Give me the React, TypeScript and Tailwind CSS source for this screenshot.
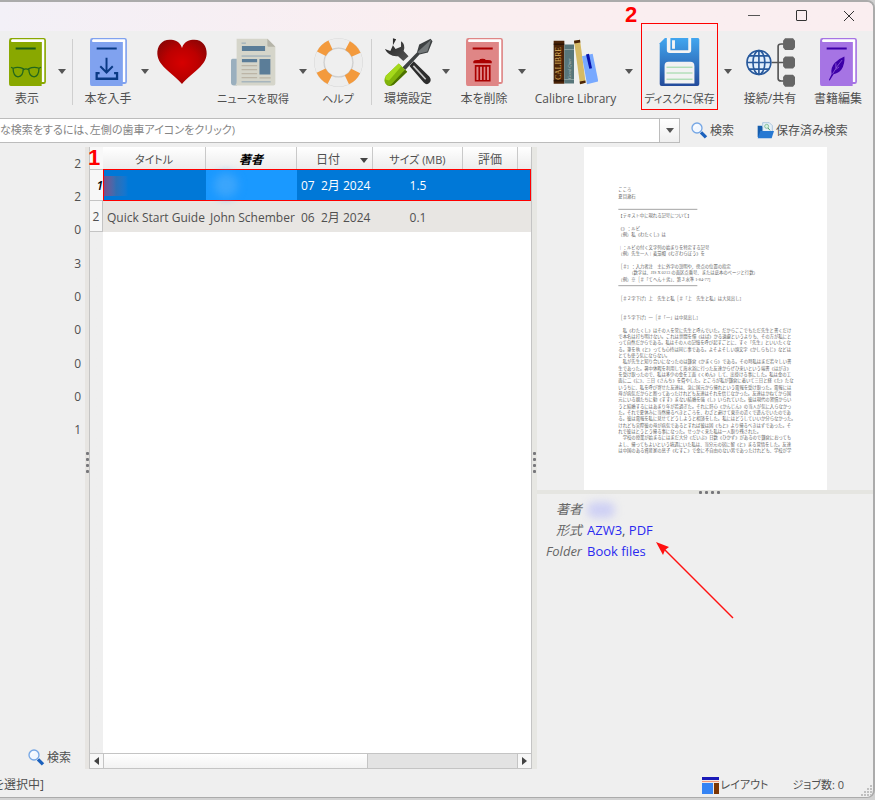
import type { ReactNode } from "react";

const COVER_LINES: [number, string][] = [
  [133, "こころ"],
  [154, "夏目漱石"],
  [212, "【テキスト中に現れる記号について】"],
  [249, "《》：ルビ"],
  [268, "（例）私《わたくし》は"],
  [306, "｜：ルビの付く文字列の始まりを特定する記号"],
  [325, "（例）先生一人｜麦藁帽《むぎわらぼう》を"],
  [364, "［＃］：入力者注　主に外字の説明や、傍点の位置の指定"],
  [383, "　　　（数字は、JIS X 0213 の面区点番号、または底本のページと行数）"],
  [402, "（例）※［＃「てへん＋劣」、第３水準 1-84-77］"],
  [460, "［＃２字下げ］上　先生と私［＃「上　先生と私」は大見出し］"],
  [517, "［＃５字下げ］一［＃「一」は中見出し］"],
];

const COVER_BODY = [
  "　私《わたくし》はその人を常に先生と呼んでいた。だからここでもただ先生と書くだけ",
  "で本名は打ち明けない。これは世間を憚《はば》かる遠慮というよりも、その方が私にと",
  "って自然だからである。私はその人の記憶を呼び起すごとに、すぐ「先生」といいたくな",
  "る。筆を執《と》っても心持は同じ事である。よそよそしい頭文字《かしらもじ》などは",
  "とても使う気にならない。",
  "　私が先生と知り合いになったのは鎌倉《かまくら》である。その時私はまだ若々しい書",
  "生であった。暑中休暇を利用して海水浴に行った友達からぜひ来いという端書《はがき》",
  "を受け取ったので、私は多少の金を工面《くめん》して、出掛ける事にした。私は金の工",
  "面に二《に》、三日《さんち》を費やした。ところが私が鎌倉に着いて三日と経《た》たな",
  "いうちに、私を呼び寄せた友達は、急に国元から帰れという電報を受け取った。電報には",
  "母が病気だからと断ってあったけれども友達はそれを信じなかった。友達はかねてから国",
  "元にいる親たちに勧《すす》まない結婚を強《し》いられていた。彼は現代の習慣からい",
  "うと結婚するにはあまり年が若過ぎた。それに肝心《かんじん》の当人が気に入らなかっ",
  "た。それで夏休みに当然帰るべきところを、わざと避けて東京の近くで遊んでいたのであ",
  "る。彼は電報を私に見せてどうしようと相談をした。私にはどうしていいか分らなかった。",
  "けれども実際彼の母が病気であるとすれば彼は固《もと》より帰るべきはずであった。そ",
  "れで彼はとうとう帰る事になった。せっかく来た私は一人取り残された。",
  "　学校の授業が始まるにはまだ大分《だいぶ》日数《ひかず》があるので鎌倉におっても",
  "よし、帰ってもよいという境遇にいた私は、当分元の宿に留《と》まる覚悟をした。友達",
  "は中国のある資産家の息子《むすこ》で金に不自由のない男であったけれども、学校が学",
];

function Book({ color, children }: { color: string; children: ReactNode }) {
  return (
    <svg viewBox="0 0 112 146" className="h-12 w-[37px]" aria-hidden="true">
      <rect width="112" height="140" rx="7" fill={color} />
      <path d="M9 4H104Q107 4 107 7V134H99V12H7Q4 6 9 4Z" fill="#fff" />
      <path d="M0 8Q2 12 8 12H99V146H5Q0 146 0 141Z" fill={color} />
      {children}
    </svg>
  );
}

function ViewIcon() {
  return (
    <Book color="#89a800">
      <path d="M20 32H81" stroke="#1b5b1b" strokeWidth="6" />
      <g fill="none" stroke="#23661c" strokeWidth="4">
        <path d="M12 92Q26 86 43 93Q43 118 27 118Q13 117 12 92ZM60 93Q76 86 91 92Q90 117 76 118Q60 118 60 93ZM43 97Q51 91 60 97M12 92L6 89M91 92L97 89" />
      </g>
    </Book>
  );
}

function GetIcon() {
  return (
    <Book color="#80a2ef">
      <path d="M20 32H81" stroke="#0a3a85" strokeWidth="6" />
      <g fill="none" stroke="#0a3a85">
        <path d="M50 60V104M31 86L50 105L69 86" strokeWidth="6" />
        <path d="M29 107H20V124H82V107H73" strokeWidth="7" />
      </g>
    </Book>
  );
}

function DeleteIcon() {
  return (
    <Book color="#df8686">
      <path d="M20 32H81" stroke="#a90000" strokeWidth="6" />
      <g fill="#a90000">
        <path d="M22 71Q24 67 34 67H40Q41 63 50 63Q59 63 60 67H66Q76 67 78 71V77H22Z" />
      </g>
      <path d="M29 85H72V130H29ZM40 85V130M51 85V130M61 85V130" fill="none" stroke="#a90000" strokeWidth="5" />
    </Book>
  );
}

function EditIcon() {
  return (
    <Book color="#a674e4">
      <path d="M20 32H81" stroke="#3d00a8" strokeWidth="6" />
      <path d="M74 56Q76 78 65 96Q56 108 41 110L29 130L27 127L35 110Q31 90 45 75Q56 63 74 56Z" fill="#3d00a8" />
      <path d="M67 67Q49 88 38 109M48 77V91M58 88L47 96" stroke="#a674e4" strokeWidth="2" fill="none" />
    </Book>
  );
}

function HeartIcon() {
  return (
    <svg viewBox="0 0 150 144" className="h-12 w-[50px]" aria-hidden="true">
      <defs>
        <radialGradient id="heart" cx="50%" cy="52%" r="60%">
          <stop offset="0" stopColor="#d60000" />
          <stop offset="0.55" stopColor="#bd0000" />
          <stop offset="1" stopColor="#8d0505" />
        </radialGradient>
      </defs>
      <path d="M75 30C68 8 52 5 38 5C14 5 0 24 1 48C3 86 52 109 75 138C98 109 147 86 149 48C150 24 136 5 112 5C98 5 82 8 75 30Z" fill="url(#heart)" />
    </svg>
  );
}

function NewsIcon() {
  return (
    <svg viewBox="0 0 136 144" className="h-12 w-[45px]" aria-hidden="true">
      <path d="M0 67Q0 62 5 62H18V143H9Q0 143 0 134Z" fill="#9aafbe" />
      <path d="M17 2H110L134 26V138Q134 143 128 143H8Q17 143 17 132Z" fill="#d5d5ca" />
      <path d="M110 2L134 26H114Q110 26 110 22Z" fill="#b5b4a8" />
      <path d="M33 24H103V39H33ZM33 63H79V73H33ZM86 63H119V110H86Z" fill="#5b7d98" />
      <path d="M32 54H120M32 132H120M32 15H45" stroke="#8fa5b5" strokeWidth="3" />
      <path d="M32 83H79M32 95H79M32 107H79M32 119H79M86 120H120" stroke="#bcb5a6" strokeWidth="4" />
    </svg>
  );
}

function HelpIcon() {
  return (
    <svg viewBox="0 0 148 148" className="size-[49px]" aria-hidden="true">
      <circle cx="74" cy="74" r="58" fill="none" stroke="#d1d1d1" strokeWidth="31" />
      <circle cx="74" cy="74" r="59" fill="none" stroke="#ededed" strokeWidth="27" />
      <circle cx="74" cy="74" r="58" fill="none" stroke="#f39a3d" strokeWidth="30" strokeDasharray="38 53.1" strokeDashoffset="-26.5" />
      <circle cx="74" cy="74" r="43" fill="none" stroke="#b8b8b8" strokeWidth="1" />
    </svg>
  );
}

function ToolsIcon() {
  return (
    <svg viewBox="0 0 150 148" className="h-12 w-[49px]" aria-hidden="true">
      <defs>
        <linearGradient id="steel" x1="0" y1="0" x2="1" y2="1">
          <stop offset="0" stopColor="#202020" />
          <stop offset="1" stopColor="#555" />
        </linearGradient>
      </defs>
      <path d="M27 1L37 4L27 22L35 34L52 27V10Q67 20 60 40L75 56L59 71L43 56Q15 59 2 34L19 40L27 22Z" fill="url(#steel)" />
      <path d="M78 86L91 72L139 119Q148 130 139 139Q131 147 122 137Z" fill="#2d2d2d" />
      <path d="M90 86L128 127" stroke="#c9c9c9" strokeWidth="5" />
      <path d="M56 91L101 45L108 20L143 2L149 10L135 45L109 51L65 99Z" fill="#3d4142" />
      <path d="M102 44L145 5L133 42L109 48Z" fill="#737879" />
      <path d="M45 79L71 104L30 143Q14 154 4 140Q-3 129 6 116Z" fill="#80b30b" />
      <path d="M45 79L53 87L15 131L4 128Q2 121 6 116Z" fill="#a5d91b" />
      <path d="M71 104L64 98L24 141Q14 152 4 140Q16 151 30 143Z" fill="#4c7100" />
    </svg>
  );
}

function LibraryIcon() {
  return (
    <svg viewBox="0 0 135 135" className="h-[46px] w-[45px]" aria-hidden="true">
      <path d="M2 4H34V133H2Z" fill="#4b2408" />
      <path d="M2 14H34M2 124H34" stroke="#1c0c02" strokeWidth="3" />
      <text transform="translate(25 121) rotate(-90)" fontFamily="Liberation Serif, serif" fontSize="23" fill="#dfb25e">CALIBRE</text>
      <path d="M34 15H63V132H34Z" fill="#58767a" />
      <path d="M34 30H63M34 120H63" stroke="#a5b6b7" strokeWidth="2" />
      <text transform="translate(53 119) rotate(-90)" fontFamily="Liberation Serif, serif" fontStyle="italic" fontSize="14" fill="#b6c2c1">Good Quer</text>
      <path d="M63 4L81 1L98 130L81 134Z" fill="#d6ba65" />
      <path d="M63 4L81 1L82 9L64 12ZM80 126L97 123L98 130L81 134Z" fill="#4b2408" />
      <path d="M87 50L119 43L136 126L102 134Z" fill="#78a9ff" />
      <path d="M99 45L108 43L117 86L109 88Z" fill="#0813ae" />
    </svg>
  );
}

function SaveIcon() {
  return (
    <svg viewBox="0 0 124 148" className="h-12 w-[41px]" aria-hidden="true">
      <defs>
        <linearGradient id="disk" x1="0" y1="0" x2="0" y2="1">
          <stop offset="0" stopColor="#41a6ef" />
          <stop offset="1" stopColor="#244b9b" />
        </linearGradient>
      </defs>
      <path d="M17 0H119Q123 0 123 5V142Q123 148 117 148H7Q1 148 1 142V16Z" fill="url(#disk)" />
      <path d="M23 0H34V38H89V0H98V38Q98 46 90 46H32Q23 46 23 38Z" fill="#f4f4f4" />
      <path d="M39 7H48V33H39Z" fill="#f4f4f4" />
      <path d="M16 140V86Q16 73 28 73H95Q108 73 108 86V140Z" fill="#f2f2f2" />
      <path d="M22 90H102M22 108H102M22 127H102" stroke="#91d49b" strokeWidth="3" />
    </svg>
  );
}

function ShareIcon() {
  return (
    <svg viewBox="0 0 148 148" className="size-[49px]" aria-hidden="true">
      <path d="M77 74H117M97 74V25Q97 18 107 18H117M97 74V122Q97 130 107 130H117" stroke="#555" strokeWidth="5" fill="none" />
      <g fill="#666">
        <path d="M118 1H142L148 8V29L142 36H118L112 29V8ZM118 56H142L148 63V85L142 92H118L112 85V63ZM118 111H142L148 118V140L142 147H118L112 140V118Z" />
      </g>
      <g fill="none" stroke="#28599c" strokeWidth="5">
        <circle cx="39" cy="74" r="36" fill="#e2eefb" />
        <ellipse cx="39" cy="74" rx="18" ry="36" />
        <path d="M39 38V110M3 74H75M8 54H70M8 94H70" />
      </g>
    </svg>
  );
}

function Magnifier() {
  return (
    <svg viewBox="0 0 51 51" className="size-[17px] shrink-0" aria-hidden="true">
      <path d="M30 31L45 46" stroke="#1b61bd" strokeWidth="10" />
      <circle cx="18" cy="18" r="15" fill="#f1f7ff" stroke="#76a7e5" strokeWidth="4" />
      <path d="M9 19Q10 9 20 9" stroke="#fff" strokeWidth="3" fill="none" />
    </svg>
  );
}

function SavedIcon() {
  return (
    <svg viewBox="0 0 51 51" className="size-[17px] shrink-0" aria-hidden="true">
      <path d="M2 11H14L18 16H35V45H2Z" fill="#155dad" />
      <path d="M17 2H37L46 11V30H17Z" fill="#e5eff7" stroke="#8fb5d6" strokeWidth="2" />
      <circle cx="29" cy="13" r="6" fill="#d8f1df" stroke="#64a87b" strokeWidth="2" />
      <path d="M33 18L39 25" stroke="#4e9b67" strokeWidth="3" />
      <path d="M10 27H51L44 49H2Z" fill="#2678d2" />
    </svg>
  );
}

function Caret({ label }: { label: string }) {
  return (
    <button aria-label={label} className="flex h-20 w-4 shrink-0 items-center justify-center">
      <svg viewBox="0 0 8 5" className="h-[5px] w-2" aria-hidden="true">
        <path d="M0 0H8L4 5Z" fill="#555" />
      </svg>
    </button>
  );
}

function Tool({ label, width, children }: { label?: string; width: string; children: ReactNode }) {
  return (
    <button
      aria-label={label ?? "寄付"}
      className={`flex shrink-0 flex-col items-center gap-[3px] pt-[7px] whitespace-nowrap ${width}`}
    >
      <span className="flex h-12 items-center">{children}</span>
      {label && <span className="leading-5">{label}</span>}
    </button>
  );
}

function Separator({ className }: { className: string }) {
  return <div className={`mt-2 h-[66px] w-px shrink-0 bg-[#cfcfcf] ${className}`} />;
}

function Dots({ vertical }: { vertical?: boolean }) {
  return (
    <div className={`flex items-center ${vertical ? "flex-col gap-[3px] pt-2" : "gap-[3px] pl-2"}`}>
      {[0, 1, 2, 3].map((n) => (
        <i key={n} className="size-[3px] rounded-[1px] bg-[#77777b]" />
      ))}
    </div>
  );
}

const HEAD = "h-[22px] border-r border-[#c9c9c9] bg-linear-to-b from-white to-[#ececec] px-0 pt-1 pb-0 font-normal";
const SELECTED = "h-8 border-y border-[#ff0000] bg-[#0078d7] px-1 pt-0.5 pb-0";
const PLAIN = "h-[31px] bg-[#e8e6e3] px-1 pt-0.5 pb-0";

export default function App() {
  return (
    <div
      lang="ja"
      className="flex min-h-screen flex-col bg-[#d2d2d2] pb-0.5 font-['Open_Sans','Noto_Sans_CJK_JP',sans-serif] text-xs text-[#505050] [font-feature-settings:'palt']"
    >
      <div className="flex flex-1 flex-col overflow-hidden rounded-r-lg border-t-2 border-r-2 border-b border-[#ababab] bg-[#efefef]">
        <header className="flex h-[29px] items-center justify-end gap-9 bg-linear-to-r from-[#f3f0f7] via-[#faeef0] to-[#faeef0] pr-[18px] pb-0.5">
          <button aria-label="最小化" className="flex size-3 items-center">
            <span className="h-px w-full bg-[#555]" />
          </button>
          <button aria-label="最大化" className="size-[11px] rounded-[1px] border border-[#333]" />
          <button aria-label="閉じる" className="size-3">
            <svg viewBox="0 0 12 12" className="size-3" aria-hidden="true">
              <path d="M1 1L11 11M11 1L1 11" stroke="#333" strokeWidth="1" />
            </svg>
          </button>
        </header>

        <nav aria-label="ツールバー" className="flex h-[87px] items-start">
          <Tool label="表示" width="w-[54px]"><ViewIcon /></Tool>
          <Caret label="表示メニュー" />
          <Separator className="mr-1.5 ml-0.5" />
          <Tool label="本を入手" width="w-[58px]"><GetIcon /></Tool>
          <Caret label="本を入手メニュー" />
          <Tool width="w-[58px]"><HeartIcon /></Tool>
          <Tool label="ニュースを取得" width="w-[84px] text-[11px]"><NewsIcon /></Tool>
          <Caret label="ニュースメニュー" />
          <Tool label="ヘルプ" width="w-[54px] text-[11px]"><HelpIcon /></Tool>
          <Separator className="mx-1.5" />
          <Tool label="環境設定" width="w-[60px]"><ToolsIcon /></Tool>
          <Caret label="環境設定メニュー" />
          <Tool label="本を削除" width="w-[60px]"><DeleteIcon /></Tool>
          <Caret label="本を削除メニュー" />
          <Tool label="Calibre Library" width="w-[91px]"><LibraryIcon /></Tool>
          <Caret label="ライブラリメニュー" />
          <div className="relative mr-0.5 ml-1">
            <Tool label="ディスクに保存" width="w-[77px] text-[11px]"><SaveIcon /></Tool>
            <div className="pointer-events-none absolute inset-x-0 -top-2 h-[87px] border border-[#ff0000]" />
            <b className="absolute -top-7 -left-4 font-['Liberation_Sans',sans-serif] text-[22px] leading-6 text-[#ff0000]">2</b>
          </div>
          <Caret label="保存メニュー" />
          <Tool label="接続/共有" width="w-[68px]"><ShareIcon /></Tool>
          <Tool label="書籍編集" width="w-[68px]"><EditIcon /></Tool>
        </nav>

        <form className="flex h-[25px] items-stretch" onSubmit={(e) => e.preventDefault()}>
          <input
            type="text"
            aria-label="検索"
            placeholder="な検索をするには、左側の歯車アイコンをクリック)"
            className="min-w-0 flex-1 border-y border-[#bcbcbc] bg-white p-0 text-[11px] outline-none placeholder:text-[#858585]"
          />
          <button
            type="button"
            aria-label="検索履歴"
            className="flex w-[21px] items-center justify-center border border-[#bcbcbc] bg-linear-to-b from-white to-[#efefef]"
          >
            <svg viewBox="0 0 8 5" className="h-[5px] w-2" aria-hidden="true"><path d="M0 0H8L4 5Z" fill="#555" /></svg>
          </button>
          <button type="submit" className="ml-[11px] flex w-[66px] items-center gap-0.5 whitespace-nowrap"><Magnifier />検索</button>
          <button type="button" className="flex w-[116px] items-center gap-0.5 whitespace-nowrap"><SavedIcon />保存済み検索</button>
        </form>

        <main className="mt-1 grid flex-1 grid-cols-[85px_4px_443px_5px_minmax(0,1fr)]">
          <aside className="flex flex-col justify-between">
            <ul className="grid h-[300px] grid-rows-9 pr-1 text-right">
              {[2, 2, 0, 3, 0, 0, 0, 0, 1].map((n, i) => (
                <li key={i} className="flex items-center justify-end">{n}</li>
              ))}
            </ul>
            <button className="mb-[3px] ml-7 flex items-center gap-0.5"><Magnifier />検索</button>
          </aside>

          <div className="flex items-center justify-center bg-[#e7e5e2]"><Dots vertical /></div>

          <section className="relative flex flex-col border-x border-[#c4c4c4]">
            <b className="absolute -top-px -left-0.5 z-10 font-['Liberation_Sans',sans-serif] text-[22px] leading-6 text-[#ff0000] [text-shadow:0_0_2px_white]">1</b>
            <div className="flex-1 bg-linear-to-r from-[#efefef] from-[13px] to-white to-[13px]">
              <table className="w-full table-fixed border-separate border-spacing-0 text-left whitespace-nowrap">
                <colgroup>
                  <col className="w-[13px]" />
                  <col className="w-[103px]" />
                  <col className="w-[91px]" />
                  <col className="w-[76px]" />
                  <col className="w-[90px]" />
                  <col className="w-[55px]" />
                  <col />
                </colgroup>
                <thead>
                  <tr className="text-center">
                    <td className="h-[22px] bg-[#f8f8f8] p-0" />
                    <th scope="col" className={`${HEAD} text-[11px]`}>タイトル</th>
                    <th scope="col" className={HEAD}><b className="text-black italic">著者</b></th>
                    <th scope="col" className={HEAD}>
                      <span className="flex items-center justify-end gap-5 pr-1">
                        日付
                        <svg viewBox="0 0 8 5" className="h-[5px] w-2" aria-hidden="true"><path d="M0 0H8L4 5Z" fill="#444" /></svg>
                      </span>
                    </th>
                    <th scope="col" className={`${HEAD} text-[11px]`}>サイズ (MB)</th>
                    <th scope="col" className={HEAD}>評価</th>
                    <td className="bg-linear-to-b from-white to-[#ececec] p-0" />
                  </tr>
                </thead>
                <tbody>
                  <tr className="text-white">
                    <th scope="row" className="border-y border-[#c4c4c4] bg-[#f7f7f7] px-0 pt-0.5 pb-0 text-right font-semibold text-black italic">1</th>
                    <td className={`${SELECTED} border-l pl-0`}>
                      <div className="h-5 w-6 bg-linear-to-r from-[#74508c] via-[#2d6fb5] to-[#0078d7]" />
                    </td>
                    <td className="h-8 border-y border-[#ff0000] bg-[#1a99ff] px-2 py-0">
                      <div className="size-6 rounded-full bg-[#3ba5fc] blur-xs" />
                    </td>
                    <td className={`${SELECTED} whitespace-pre`}>07  2月 2024</td>
                    <td className={`${SELECTED} text-center`}>1.5</td>
                    <td className={SELECTED} />
                    <td className={`${SELECTED} border-r`} />
                  </tr>
                  <tr>
                    <th scope="row" className="border-r border-b border-[#c4c4c4] bg-[#f7f7f7] px-0 pt-0.5 pb-0 text-center font-normal">2</th>
                    <td className={PLAIN}>Quick Start Guide</td>
                    <td className={PLAIN}>John Schember</td>
                    <td className={`${PLAIN} whitespace-pre`}>06  2月 2024</td>
                    <td className={`${PLAIN} text-center`}>0.1</td>
                    <td className={PLAIN} />
                    <td className={PLAIN} />
                  </tr>
                </tbody>
              </table>
            </div>
            <div className="flex h-4 border-y border-[#c4c4c4] bg-[#e3e3e3]">
              <button aria-label="左へ" className="flex w-3.5 items-center justify-center border-r border-[#c4c4c4] bg-[#f7f7f7]">
                <svg viewBox="0 0 5 8" className="h-2 w-[5px]" aria-hidden="true"><path d="M5 0V8L0 4Z" fill="#444" /></svg>
              </button>
              <div className="w-[264px] border-r border-[#c4c4c4] bg-linear-to-b from-white to-[#f2f2f2]" />
              <button aria-label="右へ" className="ml-auto flex w-3.5 items-center justify-center border-l border-[#c4c4c4] bg-[#f7f7f7]">
                <svg viewBox="0 0 5 8" className="h-2 w-[5px]" aria-hidden="true"><path d="M0 0V8L5 4Z" fill="#444" /></svg>
              </button>
            </div>
          </section>

          <div className="flex items-center justify-center bg-[#e7e7e3]"><Dots vertical /></div>

          <section className="flex flex-col">
            <svg viewBox="0 0 729 1029" role="img" aria-label="表紙" className="mx-auto h-[343px] w-[243px] bg-white">
              <g fontFamily="Liberation Serif, Noto Sans CJK JP, serif" fontSize="13" fill="#666" className="[font-feature-settings:normal]">
                {COVER_LINES.map(([y, line]) => (
                  <text key={y} x="103" y={y - 1} xmlSpace="preserve">{line}</text>
                ))}
                {COVER_BODY.map((line, i) => (
                  <text key={line} x="103" y={554 + i * 19}>{line}</text>
                ))}
              </g>
              <path d="M103 187H340M103 416H340" stroke="#777" strokeWidth="2" />
            </svg>
            <div className="flex h-1 items-center justify-center bg-[#e5e5e1]"><Dots /></div>
            <div className="relative pt-[5px] text-[13px]">
              <dl className="grid grid-cols-[45px_1fr] gap-x-[5px] leading-[21px]">
                <dt className="justify-self-end text-[#666] italic">著者</dt>
                <dd className="flex items-center"><span className="h-4 w-7 rounded-full bg-[#ced0f4] blur-xs" /></dd>
                <dt className="justify-self-end text-[#666] italic">形式</dt>
                <dd><a href="#azw3" className="text-[#2a2af0]">AZW3</a>, <a href="#pdf" className="text-[#2a2af0]">PDF</a></dd>
                <dt className="justify-self-end text-[#666] italic">Folder</dt>
                <dd><a href="#folder" className="text-[#2a2af0]">Book files</a></dd>
              </dl>
              <svg viewBox="0 0 78 78" className="absolute top-12 left-[119px] size-[78px]" aria-hidden="true">
                <path d="M8 7L77 76" stroke="#f11" strokeWidth="1.5" />
                <path d="M0 0L13 5L9 8L7 13Z" fill="#f11" />
              </svg>
            </div>
          </section>
        </main>

        <footer className="flex h-7 items-center pt-1 whitespace-nowrap">
          <span className="flex w-11 justify-end overflow-hidden">を選択中]</span>
          <button className="ml-auto flex items-center gap-px text-[11px]">
            <svg viewBox="0 0 17 17" className="size-[17px]" aria-hidden="true">
              <path d="M0 0H17V17H0Z" fill="#f3e8e2" />
              <path d="M0 0H17V3H0Z" fill="#1a1ab8" />
              <path d="M0 4H17V5H0Z" fill="#f19a7c" />
              <path d="M0 6H11V17H0Z" fill="#3584f4" />
              <path d="M12 6H17V17H12Z" fill="#7c3604" />
            </svg>
            レイアウト
          </button>
          <span className="mr-[17px] ml-6 text-[11px]">ジョブ数: 0</span>
          <svg viewBox="0 0 12 12" className="size-3 self-end" aria-hidden="true">
            <path d="M9 1h2M9 4h2M6 4h2M9 7h2M6 7h2M3 7h2M9 10h2M6 10h2M3 10h2M0 10h2" stroke="#c0c0c0" strokeWidth="2" />
          </svg>
        </footer>
      </div>
    </div>
  );
}
